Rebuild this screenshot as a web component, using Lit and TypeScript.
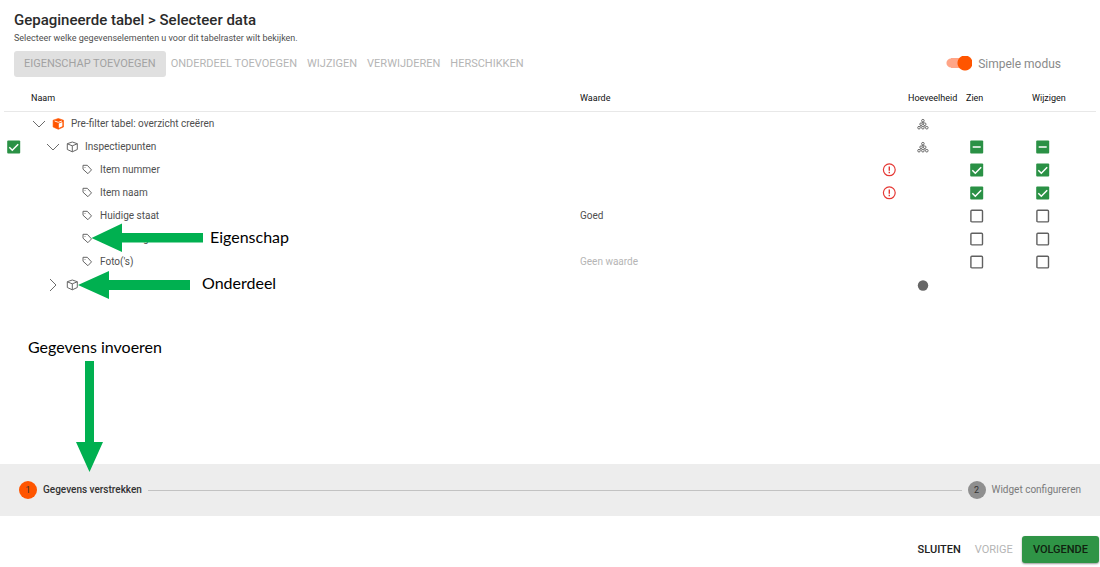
import { LitElement, html, svg, css, nothing } from "lit";
import { customElement, state } from "lit/decorators.js";

type Kind = "root" | "part" | "property";
type Tick = "on" | "off" | "mixed";

interface Row {
  name: string;
  kind: Kind;
  level: number;
  open?: boolean;
  value?: string;
  placeholder?: string;
  required?: boolean;
  amount?: "many" | "one";
  picked?: boolean;
  see?: Tick;
  edit?: Tick;
}

const ROWS: Row[] = [
  { name: "Pre-filter tabel: overzicht creëren", kind: "root", level: 0, open: true, amount: "many" },
  { name: "Inspectiepunten", kind: "part", level: 1, open: true, amount: "many", picked: true, see: "mixed", edit: "mixed" },
  { name: "Item nummer", kind: "property", level: 2, required: true, see: "on", edit: "on" },
  { name: "Item naam", kind: "property", level: 2, required: true, see: "on", edit: "on" },
  { name: "Huidige staat", kind: "property", level: 2, value: "Goed", see: "off", edit: "off" },
  { name: "Opmerking", kind: "property", level: 2, see: "off", edit: "off" },
  { name: "Foto('s)", kind: "property", level: 2, placeholder: "Geen waarde", see: "off", edit: "off" },
  { name: "", kind: "part", level: 1, open: false, amount: "one" },
];

const chevron = svg`<svg width="14" height="14" viewBox="0 0 14 14" fill="none" stroke="#6b6b6b" stroke-width="1"><path d="M1 4l6 6 6-6"/></svg>`;

const icons = {
  root: svg`<svg width="12" height="12" viewBox="0 0 12 12"><path d="M6.300 .5l5.200 1.700v6.800L6.300 11.300 1.100 9V2.200z" fill="#ff5500" stroke="#ff5500" stroke-width=".6" stroke-linejoin="round"/><path d="M6.800 5.400l3.600-1.300v4.200L6.800 9.900z" fill="#fff"/><path d="M2.600 3l3.700 1.300L10 3" fill="none" stroke="#fff" stroke-width=".9"/></svg>`,
  part: svg`<svg width="12" height="12" viewBox="0 0 12 12" fill="none" stroke="#666" stroke-width="1" stroke-linejoin="round"><path d="M6.300 1l5 1.700v5.800l-5 2.300-5-2.300V2.700zM1.300 2.800l5 2 5-2M6.300 4.800v6"/></svg>`,
  property: svg`<svg width="12" height="12" viewBox="0 0 12 12" fill="none" stroke="#666" stroke-width="1" stroke-linejoin="round"><path d="M2 1.300h4.300l4.200 4.600-3.600 3.800L2 5.200z"/><circle cx="4" cy="3.400" r=".5" fill="#666" stroke="none"/></svg>`,
};

const many = svg`<svg width="12" height="12" viewBox="0 0 12 12" fill="none" stroke="#6a6a6a" stroke-width="1"><circle cx="5.900" cy="2.700" r="1.300"/><circle cx="4.100" cy="6.200" r="1.300"/><circle cx="7.700" cy="6.200" r="1.300"/><circle cx="2" cy="9.700" r="1.300"/><circle cx="5.900" cy="9.700" r="1.300"/><circle cx="9.800" cy="9.700" r="1.300"/><path d="M5 4.400h1.800M3 8h1.600M7 8h1.600"/></svg>`;
const one = svg`<svg width="12" height="12" viewBox="0 0 12 12"><circle cx="6" cy="6.500" r="5.200" fill="#666"/></svg>`;
const alertIcon = svg`<svg width="14" height="14" viewBox="0 0 14 14" fill="none" stroke="#e53935"><circle cx="7.300" cy="6.800" r="5.900" stroke-width="1.200"/><path d="M7.300 3.500v4.200M7.300 8.800v1.400" stroke-width="1.400"/></svg>`;

@customElement("app-root")
export class AppRoot extends LitElement {
  @state() private simple = true;

  static styles = css`
    :host {
      display: block;
      font-family: Roboto, "Liberation Sans", sans-serif;
      font-size: 10px;
      line-height: 14px;
      color: #4f4f4f;
      background: #fff;
    }
    *, *::before, *::after { box-sizing: border-box; }
    svg { display: block; flex: none; }
    .page {
      position: relative;
      display: flex;
      flex-direction: column;
      min-height: 100vh;
    }
    .head { padding: 11px 14px 0; }
    .title {
      margin: 0;
      font-size: 15px;
      line-height: 18px;
      font-weight: 500;
      color: #2b2b2b;
    }
    .sub { margin: 2px 0 0; font-size: 9px; }
    .bar {
      display: flex;
      justify-content: space-between;
      align-items: center;
      padding: 6px 39px 0 14px;
    }
    .tools { display: flex; align-items: center; }
    button {
      font: 500 11px/14px Roboto, "Liberation Sans", sans-serif;
      text-transform: uppercase;
      height: 26px;
      padding: 0 5px;
      border: 0;
      border-radius: 3px;
      background: none;
      color: #212121;
      cursor: pointer;
    }
    button:disabled { color: #b5b5b5; font-weight: 400; cursor: default; }
    .filled { padding: 0 10px; }
    .filled:disabled { background: #e0e0e0; color: #a2a2a2; }
    .switch {
      display: flex;
      align-items: center;
      gap: 6px;
      font-size: 12px;
      color: #8a8a8a;
    }
    .toggle {
      appearance: none;
      margin: 0;
      width: 27px;
      height: 16px;
      background:
        radial-gradient(circle at 8px 7px, #f5f5f5 7px, transparent 8px),
        linear-gradient(#bdbdbd, #bdbdbd) 4px 2px / 23px 10px no-repeat;
    }
    .toggle:checked {
      background:
        radial-gradient(circle at 20px 7px, #ff5500 7px, transparent 8px),
        radial-gradient(circle at 6px 7px, #ffa587 4px, transparent 5px),
        linear-gradient(#ffa587, #ffa587) 6px 2px / 15px 10px no-repeat;
    }
    .grid { padding: 7px 4px 0; }
    table {
      width: 100%;
      table-layout: fixed;
      border-collapse: separate;
      border-spacing: 0;
    }
    th {
      height: 28px;
      padding: 0 7px;
      border-bottom: 1px solid #e8e8e8;
      font-size: 9px;
      font-weight: 400;
      text-align: left;
      color: #111;
    }
    td { height: 23px; padding: 0 7px; }
    .c-pick { width: 20px; }
    .c-value { width: 303px; }
    .c-alert { width: 25px; }
    .c-amount { width: 58px; }
    .c-see { width: 66px; }
    .c-edit { width: 71px; }
    .pick { padding: 0 3px; }
    .alert { padding: 0 0 0 6px; }
    .amount { padding: 0 0 0 16px; }
    .tick { padding: 0 0 0 11px; }
    .name { display: flex; align-items: center; }
    .level-0 { padding-left: 1px; }
    .level-1 { padding-left: 15px; }
    .level-2 { padding-left: 50px; }
    .name svg + span { margin-left: 7px; }
    .expand {
      display: flex;
      align-items: center;
      height: 14px;
      padding: 0;
      margin-right: 6px;
    }
    .shut svg { transform: rotate(-90deg); }
    .dim { color: #b5b5b5; }
    .box {
      appearance: none;
      display: block;
      width: 14px;
      height: 14px;
      margin: 1px 0 0;
      background: url('data:image/svg+xml,<svg xmlns="http://www.w3.org/2000/svg" viewBox="0 0 14 14"><rect x=".9" y="1.3" width="11.6" height="11.6" rx="1" fill="white" stroke="%23606060" stroke-width="1.4"/></svg>');
    }
    .box:checked {
      background: url('data:image/svg+xml,<svg xmlns="http://www.w3.org/2000/svg" viewBox="0 0 14 14"><rect x=".2" y=".6" width="13" height="13" rx="1" fill="%232a9145"/><path d="M2.3 7.200l3 3 5.900-6" fill="none" stroke="white" stroke-width="1.500"/></svg>');
    }
    .box:indeterminate {
      background: url('data:image/svg+xml,<svg xmlns="http://www.w3.org/2000/svg" viewBox="0 0 14 14"><rect x=".2" y=".6" width="13" height="13" rx="1" fill="%232a9145"/><path d="M2.700 7h8" fill="none" stroke="white" stroke-width="1.500"/></svg>');
    }
    .steps {
      display: flex;
      align-items: center;
      height: 52px;
      margin: auto 0 0;
      padding: 0 19px;
      background: #ededed;
      list-style: none;
    }
    .step {
      display: flex;
      align-items: center;
      gap: 6px;
      color: #7a7a7a;
    }
    .step.current { font-weight: 500; color: #333; }
    .dot {
      width: 18px;
      height: 18px;
      border-radius: 50%;
      background: #8f8f8f;
      color: #333;
      font-size: 9px;
      line-height: 18px;
      text-align: center;
    }
    .current .dot { background: #ff5500; font-weight: 400; }
    .rule { flex: 1; height: 1px; margin: 0 6px; background: #c2c2c2; }
    .foot {
      display: flex;
      justify-content: flex-end;
      padding: 20px 1px 4px;
    }
    .foot button { height: 27px; }
    .foot .plain { padding: 0 7px; }
    .foot .go {
      margin-left: 2px;
      padding: 0 11px;
      background: #2f9446;
      color: #10220f;
      box-shadow: 0 1px 2px rgba(0, 0, 0, 0.4);
    }
    .notes {
      position: absolute;
      left: 0;
      top: 0;
      pointer-events: none;
    }
    .note {
      position: absolute;
      font: 16px/20px Lato, "Open Sans", sans-serif;
      white-space: nowrap;
      color: #000;
    }
    .n-prop { left: 210px; top: 227px; }
    .n-part { left: 202px; top: 273px; }
    .n-data { left: 28px; top: 337px; }
  `;

  private box(t: Tick | undefined, label: string) {
    return t
      ? html`<input class="box" type="checkbox" aria-label=${label} .checked=${t === "on"} .indeterminate=${t === "mixed"} />`
      : nothing;
  }

  private row(r: Row) {
    const label = r.name || "Onderdeel";
    return html`<tr>
      <td class="pick">${this.box(r.picked ? "on" : undefined, `Selecteer ${label}`)}</td>
      <td>
        <div class="name level-${r.level}">
          ${r.open === undefined
            ? nothing
            : html`<button class="expand ${r.open ? "" : "shut"}" aria-label=${label} aria-expanded=${r.open}>${chevron}</button>`}
          ${icons[r.kind]}<span>${r.name}</span>
        </div>
      </td>
      <td class=${r.placeholder ? "dim" : ""}>${r.value ?? r.placeholder ?? ""}</td>
      <td class="alert">${r.required ? alertIcon : nothing}</td>
      <td class="amount">${r.amount === "many" ? many : r.amount === "one" ? one : nothing}</td>
      <td class="tick">${this.box(r.see, `Zien: ${label}`)}</td>
      <td class="tick">${this.box(r.edit, `Wijzigen: ${label}`)}</td>
    </tr>`;
  }

  render() {
    return html`<main class="page">
      <header class="head">
        <h1 class="title">Gepagineerde tabel &gt; Selecteer data</h1>
        <p class="sub">Selecteer welke gegevenselementen u voor dit tabelraster wilt bekijken.</p>
      </header>
      <div class="bar">
        <div class="tools">
          <button class="filled" disabled>Eigenschap toevoegen</button>
          <button disabled>Onderdeel toevoegen</button>
          <button disabled>Wijzigen</button>
          <button disabled>Verwijderen</button>
          <button disabled>Herschikken</button>
        </div>
        <label class="switch">
          <input class="toggle" type="checkbox" role="switch" .checked=${this.simple}
            @change=${() => (this.simple = !this.simple)} />
          Simpele modus
        </label>
      </div>
      <div class="grid">
        <table>
          <colgroup>
            <col class="c-pick" /><col /><col class="c-value" /><col class="c-alert" />
            <col class="c-amount" /><col class="c-see" /><col class="c-edit" />
          </colgroup>
          <thead>
            <tr><th></th><th>Naam</th><th>Waarde</th><th></th><th>Hoeveelheid</th><th>Zien</th><th>Wijzigen</th></tr>
          </thead>
          <tbody>${ROWS.map((r) => this.row(r))}</tbody>
        </table>
      </div>
      <ol class="steps">
        <li class="step current"><span class="dot">1</span>Gegevens verstrekken</li>
        <li class="rule" role="presentation"></li>
        <li class="step"><span class="dot">2</span>Widget configureren</li>
      </ol>
      <footer class="foot">
        <button class="plain">Sluiten</button>
        <button class="plain" disabled>Vorige</button>
        <button class="go">Volgende</button>
      </footer>
      <div class="notes">
        <svg width="300" height="480" viewBox="0 0 300 480" fill="#00b050">
          <path d="M91.5 238L122 223.500V233H203V242.500H122V252z" />
          <path d="M78 285L109 271V280H190V290H109V299z" />
          <path d="M85 361H94V442H103L89.500 472 76 442H85z" />
        </svg>
        <span class="note n-prop">Eigenschap</span>
        <span class="note n-part">Onderdeel</span>
        <span class="note n-data">Gegevens invoeren</span>
      </div>
    </main>`;
  }
}
